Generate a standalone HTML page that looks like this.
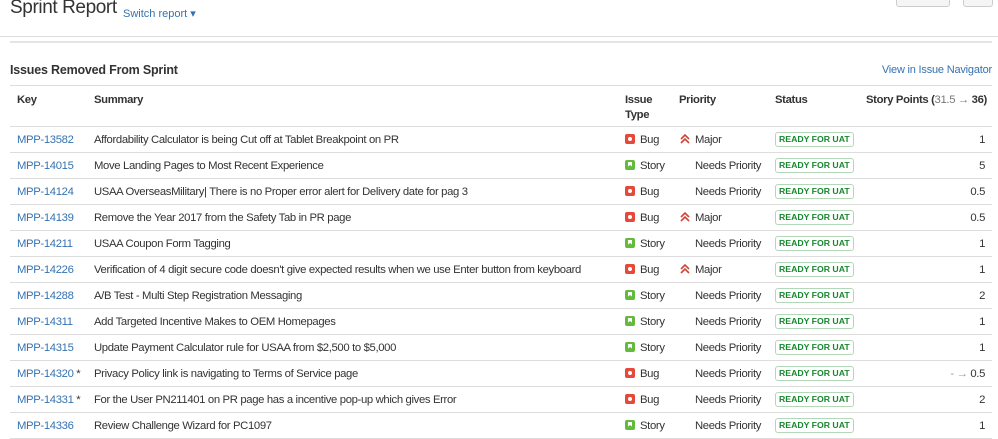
<!DOCTYPE html>
<html><head><meta charset="utf-8"><style>
body{margin:0;width:998px;height:422px;overflow:hidden;background:#fff;font-family:"Liberation Sans",Arial,sans-serif;color:#333;position:relative}
.abs{position:absolute;white-space:nowrap}
a{color:#3572b0;text-decoration:none}
table{position:absolute;left:10px;top:85px;width:982px;border-collapse:collapse;font-size:11.3px;letter-spacing:-0.35px;table-layout:fixed}
th{text-align:left;font-weight:bold;vertical-align:top;padding:7px 7px 0 7px;height:33px;border-top:1px solid #ddd;border-bottom:1px solid #ddd;line-height:15px;white-space:nowrap}
td{height:25px;padding:0 7px;border-bottom:1px solid #ddd;white-space:nowrap;overflow:hidden}
.ic{display:inline-block;width:10px;height:10px;border-radius:2px;vertical-align:-1px;margin-right:5px;position:relative}
.bug{background:#e5493a}.bug:after{content:"";position:absolute;left:3px;top:3px;width:4px;height:4px;border-radius:2px;background:#fff}
.story{background:#63ba3c}.story:after{content:"";position:absolute;left:3px;top:2px;width:4px;height:5px;background:#fff;clip-path:polygon(0 0,100% 0,100% 100%,50% 70%,0 100%)}
.st{display:inline-block;border:1px solid #b2d8b9;color:#14892c;font-size:8.7px;font-weight:bold;padding:1px 3px;border-radius:3px;line-height:11px;letter-spacing:0}
.pr{display:inline-block;width:16px;vertical-align:-1px}
.r{text-align:right}
</style></head><body>
<div class="abs" style="left:10px;top:-3px;font-size:19px;letter-spacing:-0.4px;color:#333">Sprint Report</div>
<div class="abs" style="left:123px;top:7px;font-size:11px;color:#3572b0">Switch report ▾</div>
<div class="abs" style="left:896px;top:-4px;width:52px;height:9px;border:1px solid #ccc;border-radius:3px;background:#f5f5f5"></div>
<div class="abs" style="left:963px;top:-4px;width:28px;height:9px;border:1px solid #ccc;border-radius:3px;background:#f5f5f5"></div>
<div class="abs" style="left:0;top:36px;width:998px;height:1px;background:#ddd"></div>
<div class="abs" style="left:10px;top:41px;width:982px;height:2px;background:#e5e5e5"></div>
<div class="abs" style="left:10px;top:63px;font-size:12.5px;font-weight:bold;letter-spacing:-0.2px">Issues Removed From Sprint</div>
<div class="abs" style="right:6px;top:64px;font-size:11px;letter-spacing:-0.2px"><a>View in Issue Navigator</a></div>
<table>
<colgroup><col style="width:77px"><col style="width:531px"><col style="width:54px"><col style="width:96px"><col style="width:91px"><col></colgroup>
<tr><th>Key</th><th>Summary</th><th>Issue<br>Type</th><th>Priority</th><th>Status</th><th class="r">Story Points (<span style="color:#777;font-weight:normal">31.5 → </span>36)</th></tr>
<tr><td><a>MPP-13582</a></td><td>Affordability Calculator is being Cut off at Tablet Breakpoint on PR</td><td><span class="ic bug"></span>Bug</td><td><svg class="pr" width="16" height="10" viewBox="0 0 16 10"><path d="M2 5 L6 1 L10 5 M2 9 L6 5 L10 9" fill="none" stroke="#d04437" stroke-width="1.6"/></svg>Major</td><td><span class="st">READY FOR UAT</span></td><td class="r">1</td></tr>
<tr><td><a>MPP-14015</a></td><td>Move Landing Pages to Most Recent Experience</td><td><span class="ic story"></span>Story</td><td><span class="pr"></span>Needs Priority</td><td><span class="st">READY FOR UAT</span></td><td class="r">5</td></tr>
<tr><td><a>MPP-14124</a></td><td>USAA OverseasMilitary| There is no Proper error alert for Delivery date for pag 3</td><td><span class="ic bug"></span>Bug</td><td><span class="pr"></span>Needs Priority</td><td><span class="st">READY FOR UAT</span></td><td class="r">0.5</td></tr>
<tr><td><a>MPP-14139</a></td><td>Remove the Year 2017 from the Safety Tab in PR page</td><td><span class="ic bug"></span>Bug</td><td><svg class="pr" width="16" height="10" viewBox="0 0 16 10"><path d="M2 5 L6 1 L10 5 M2 9 L6 5 L10 9" fill="none" stroke="#d04437" stroke-width="1.6"/></svg>Major</td><td><span class="st">READY FOR UAT</span></td><td class="r">0.5</td></tr>
<tr><td><a>MPP-14211</a></td><td>USAA Coupon Form Tagging</td><td><span class="ic story"></span>Story</td><td><span class="pr"></span>Needs Priority</td><td><span class="st">READY FOR UAT</span></td><td class="r">1</td></tr>
<tr><td><a>MPP-14226</a></td><td>Verification of 4 digit secure code doesn't give expected results when we use Enter button from keyboard</td><td><span class="ic bug"></span>Bug</td><td><svg class="pr" width="16" height="10" viewBox="0 0 16 10"><path d="M2 5 L6 1 L10 5 M2 9 L6 5 L10 9" fill="none" stroke="#d04437" stroke-width="1.6"/></svg>Major</td><td><span class="st">READY FOR UAT</span></td><td class="r">1</td></tr>
<tr><td><a>MPP-14288</a></td><td>A/B Test - Multi Step Registration Messaging</td><td><span class="ic story"></span>Story</td><td><span class="pr"></span>Needs Priority</td><td><span class="st">READY FOR UAT</span></td><td class="r">2</td></tr>
<tr><td><a>MPP-14311</a></td><td>Add Targeted Incentive Makes to OEM Homepages</td><td><span class="ic story"></span>Story</td><td><span class="pr"></span>Needs Priority</td><td><span class="st">READY FOR UAT</span></td><td class="r">1</td></tr>
<tr><td><a>MPP-14315</a></td><td>Update Payment Calculator rule for USAA from $2,500 to $5,000</td><td><span class="ic story"></span>Story</td><td><span class="pr"></span>Needs Priority</td><td><span class="st">READY FOR UAT</span></td><td class="r">1</td></tr>
<tr><td><a>MPP-14320</a> *</td><td>Privacy Policy link is navigating to Terms of Service page</td><td><span class="ic bug"></span>Bug</td><td><span class="pr"></span>Needs Priority</td><td><span class="st">READY FOR UAT</span></td><td class="r"><span style="color:#999">- → </span>0.5</td></tr>
<tr><td><a>MPP-14331</a> *</td><td>For the User PN211401 on PR page has a incentive pop-up which gives Error</td><td><span class="ic bug"></span>Bug</td><td><span class="pr"></span>Needs Priority</td><td><span class="st">READY FOR UAT</span></td><td class="r">2</td></tr>
<tr><td><a>MPP-14336</a></td><td>Review Challenge Wizard for PC1097</td><td><span class="ic story"></span>Story</td><td><span class="pr"></span>Needs Priority</td><td><span class="st">READY FOR UAT</span></td><td class="r">1</td></tr>
</table>
</body></html>
